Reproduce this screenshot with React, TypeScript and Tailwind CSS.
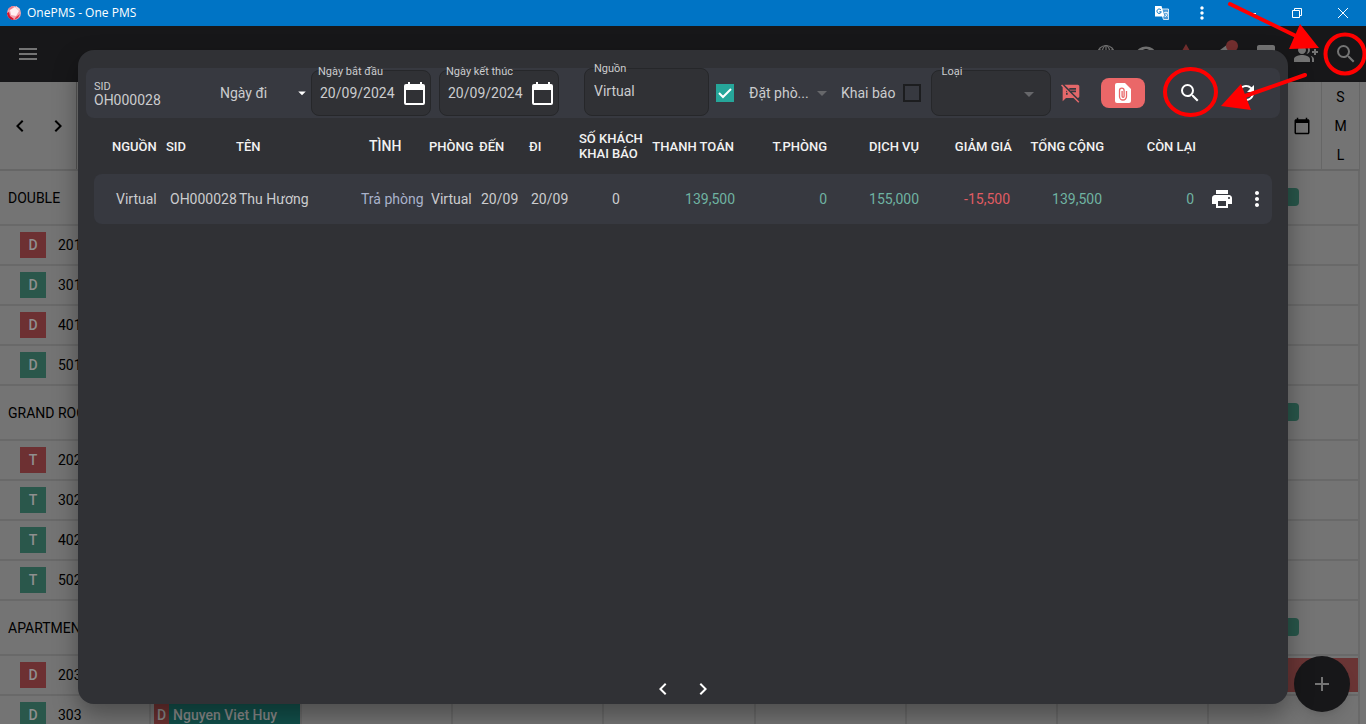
import {
  MdAdd,
  MdArrowDropDown,
  MdCalendarToday,
  MdChevronLeft,
  MdChevronRight,
  MdGroupAdd,
  MdMenu,
  MdMoreVert,
  MdPrint,
  MdRefresh,
  MdSearch,
  MdSpeakerNotesOff,
  MdViewAgenda,
  MdVisibility,
  MdWarning,
} from "react-icons/md";

type Room = { type: string; number: string; busy: boolean };
type Group = { name: string; rooms: Room[] };

const groups: Group[] = [
  {
    name: "DOUBLE",
    rooms: [
      { type: "D", number: "201", busy: true },
      { type: "D", number: "301", busy: false },
      { type: "D", number: "401", busy: true },
      { type: "D", number: "501", busy: false },
    ],
  },
  {
    name: "GRAND ROOM",
    rooms: [
      { type: "T", number: "202", busy: true },
      { type: "T", number: "302", busy: false },
      { type: "T", number: "402", busy: false },
      { type: "T", number: "502", busy: false },
    ],
  },
  {
    name: "APARTMENT",
    rooms: [
      { type: "D", number: "203", busy: true },
      { type: "D", number: "303", busy: false },
    ],
  },
];

const days = [1, 2, 3, 4, 5, 6, 7];

const columns = [
  { title: "NGUỒN", col: "w-[68px]", head: "pl-[18px]" },
  { title: "SID", col: "w-[74px]", head: "pl-1" },
  { title: "TÊN", col: "", head: "" },
  { title: "TÌNH", col: "w-[68px]", head: "pl-3 text-sm" },
  { title: "PHÒNG", col: "w-[50px]", head: "pl-1" },
  { title: "ĐẾN", col: "w-[50px]", head: "pl-1" },
  { title: "ĐI", col: "w-[50px]", head: "pl-1" },
  { title: "SỐ KHÁCH KHAI BÁO", col: "w-[74px]", head: "pl-1 whitespace-normal" },
  { title: "THANH TOÁN", col: "w-[87px]", head: "pr-0.5 text-right" },
  { title: "T.PHÒNG", col: "w-[92px]", head: "pr-px text-right" },
  { title: "DỊCH VỤ", col: "w-[92px]", head: "pr-px text-right" },
  { title: "GIẢM GIÁ", col: "w-[92px]", head: "text-right" },
  { title: "TỔNG CỘNG", col: "w-[92px]", head: "text-right" },
  { title: "CÒN LẠI", col: "w-[92px]", head: "text-right" },
];

function TitleBar() {
  return (
    <div className="flex h-[26px] shrink-0 items-center bg-[#0074c5] pl-1.5 text-white">
      <svg className="h-4 w-4" viewBox="0 0 16 16" aria-hidden="true">
        <circle cx="8" cy="8" r="7" fill="#f2a3ad" />
        <path d="M1 8l2-1 1 4 4 3-1 1A7 7 0 0 1 1 8z" fill="#d5122c" />
        <path d="M2 4l4-3 2 1-4 3z" fill="#f07c8a" />
        <path d="M4 5l5-3 4 4-3 5-5-1z" fill="#fff0f1" />
        <path d="M10 12l4-3-2 4-4 2z" fill="#e23348" />
        <path d="M10 1l4 3-1 2-3-3z" fill="#fbd3d7" />
      </svg>
      <div className="ml-[5px] font-['Open_Sans',sans-serif] text-xs">
        OnePMS - One PMS
      </div>
      <div className="ml-auto flex items-center">
        <button className="flex w-10 justify-center" aria-label="Translate">
          <svg className="h-3.5 w-3.5" viewBox="0 0 14 14">
            <path d="M5 3h8.500v10.500h-5z" fill="#4b9ad6" stroke="#fff" strokeWidth="0.800" />
            <path d="M0 0h6.500l3 10.500H0z" fill="#fff" />
            <path d="M6 4A2.200 2.200 0 1 0 6.300 5.800H4.300" fill="none" stroke="#0074c5" />
            <path
              d="M9 6.500h4M11 5.500v1M12.500 7c-.5 1.500-1 2.500-2.500 4M10 7.500l2.500 3"
              fill="none"
              stroke="#fff"
              strokeWidth="0.800"
            />
          </svg>
        </button>
        <button className="flex w-10 justify-center" aria-label="Menu">
          <MdMoreVert className="h-5 w-5" />
        </button>
        <button className="ml-1.5 flex w-[46px] justify-center" aria-label="Minimize">
          <svg className="h-2.5 w-2.5" viewBox="0 0 10 10">
            <path d="M0 5.500h10" stroke="#fff" />
          </svg>
        </button>
        <button className="flex w-[46px] justify-center" aria-label="Restore">
          <svg className="h-2.5 w-2.5" viewBox="0 0 10 10">
            <path d="M.5 2.500h7v7h-7zM2.500 2.500v-2h7v7h-2" fill="none" stroke="#fff" />
          </svg>
        </button>
        <button className="flex w-[46px] justify-center" aria-label="Close">
          <svg className="h-2.5 w-2.5" viewBox="0 0 10 10">
            <path d="M0 0l10 10M10 0L0 10" stroke="#fff" />
          </svg>
        </button>
      </div>
    </div>
  );
}

function AppHeader() {
  const button = "flex w-10 justify-center";
  return (
    <header className="flex h-14 shrink-0 items-center bg-[#171719] pl-2 text-[#747474] shadow-md">
      <button className={button} aria-label="Menu">
        <MdMenu className="h-6 w-6" />
      </button>
      <div className="ml-auto flex">
        <button className={button} aria-label="Language">
          <svg
            className="h-6 w-6"
            viewBox="0 0 24 24"
            fill="none"
            stroke="currentColor"
            strokeWidth="1.200"
          >
            <circle cx="12" cy="12" r="8.500" />
            <ellipse cx="12" cy="12" rx="4" ry="8.500" />
            <path d="M12 3.500v17M3.500 12h17M5 7.500c4 2 10 2 14 0M5 16.500c4-2 10-2 14 0" />
          </svg>
        </button>
        <button className={button} aria-label="Preview">
          <MdVisibility className="h-6 w-6" />
        </button>
        <button className={button} aria-label="Warnings">
          <MdWarning className="h-6 w-6 text-[#742f2f]" />
        </button>
        <button className="relative flex w-10 justify-center" aria-label="News">
          <svg className="h-6 w-6" viewBox="0 0 24 24" fill="currentColor">
            <path d="M14 2l7 15-11-1 1 5-3 1-3-6a5 5 0 0 1 1-8z" />
          </svg>
          <span className="absolute -top-0.5 right-2 h-3 w-3 rounded-full bg-[#742f2f]" />
        </button>
        <button className={button} aria-label="Reports">
          <MdViewAgenda className="h-6 w-6" />
        </button>
        <button className={button} aria-label="Add guest">
          <MdGroupAdd className="h-6 w-6" />
        </button>
        <button className={button} aria-label="Search">
          <MdSearch className="h-6 w-6" />
        </button>
      </div>
    </header>
  );
}

function RoomRow({ room }: { room: Room }) {
  return (
    <div className="grid h-10 grid-cols-9 border-b-2 border-[#696969]">
      <div className="flex items-center border-r-2 border-[#696969] pl-5">
        <span
          className={`flex h-[26px] w-[26px] items-center justify-center text-sm font-medium text-[#8f8f8f] ${
            room.busy ? "bg-[#6d3032]" : "bg-[#2a574b]"
          }`}
        >
          {room.type}
        </span>
        <span className="ml-3">{room.number}</span>
      </div>
      <div className="flex border-r-2 border-[#696969] py-px pl-[3px]">
        {room.number === "303" && (
          <div className="flex w-full bg-[#12504b] font-medium text-[#8a8a8a]">
            <span className="flex w-[15px] items-center justify-center bg-[#6b3030]">D</span>
            <span className="flex items-center pl-1 whitespace-nowrap">Nguyen Viet Huy</span>
          </div>
        )}
      </div>
      {days.map((day) => (
        <div key={day} className="border-r-2 border-[#696969] py-0.5">
          {room.number === "203" && day === 7 && <div className="h-full bg-[#6a3535]" />}
        </div>
      ))}
    </div>
  );
}

function Calendar() {
  return (
    <main className="flex-1 overflow-hidden bg-[#747474] pr-1.5 text-sm text-black">
      <div className="flex h-[89px] border-b-2 border-[#666666]">
        <div className="flex w-[77px] items-center justify-between border-r border-[#555555] pr-1.5 pl-2">
          <button aria-label="Previous">
            <MdChevronLeft className="h-6 w-6" />
          </button>
          <button aria-label="Next">
            <MdChevronRight className="h-6 w-6" />
          </button>
        </div>
        <div className="ml-auto flex items-center pr-2.5">
          <button aria-label="Pick a date">
            <MdCalendarToday className="h-[18px] w-[18px]" />
          </button>
        </div>
        <div className="flex w-[39px] flex-col border-x border-[#666666] pt-px text-center">
          <button className="h-[29px]">S</button>
          <button className="h-[29px]">M</button>
          <button className="h-[29px]">L</button>
        </div>
      </div>
      {groups.map((group) => (
        <section key={group.name}>
          <div className="flex h-[55px] items-center justify-between border-r-2 border-b-2 border-[#696969] pl-2">
            <h2>{group.name}</h2>
            <span className="mr-[59px] mb-px h-[18px] w-8 rounded bg-[#28564a]" />
          </div>
          {group.rooms.map((room) => (
            <RoomRow key={room.number} room={room} />
          ))}
        </section>
      ))}
    </main>
  );
}

function CalendarIcon() {
  return (
    <svg className="h-6 w-6" viewBox="0 0 24 24" fill="#fff" aria-hidden="true">
      <path d="M5 0h2v2h10V0h2v2h1a2 2 0 0 1 2 2v17a2 2 0 0 1-2 2H3a2 2 0 0 1-2-2V4a2 2 0 0 1 2-2h2zM3 8v13h17V8z" />
    </svg>
  );
}

function DateField({ id, label }: { id: string; label: string }) {
  return (
    <div className="relative flex h-[46px] w-[120px] items-center rounded-lg border border-[#26272a] bg-[#303135] pr-[3px] pl-2">
      <label
        htmlFor={id}
        className="absolute -top-[7px] left-1.5 text-[11px] leading-4 whitespace-nowrap"
      >
        {label}
      </label>
      <input
        id={id}
        defaultValue="20/09/2024"
        className="w-full min-w-0 bg-transparent text-sm outline-none"
      />
      <button type="button" className="mt-0.5" aria-label={label}>
        <CalendarIcon />
      </button>
    </div>
  );
}

function Filters() {
  return (
    <form className="mx-2 flex h-[50px] items-center rounded-lg bg-[#373940] pl-2 text-sm text-[#cbccce]">
      <div className="mt-0.5 flex w-[126px] flex-col">
        <label htmlFor="sid" className="text-[11px] leading-3">
          SID
        </label>
        <input
          id="sid"
          defaultValue="OH000028"
          className="h-3.5 w-full bg-transparent text-sm leading-3.5 outline-none"
        />
      </div>
      <div className="relative w-[91px]">
        <select
          aria-label="Loại ngày"
          className="w-full appearance-none bg-transparent outline-none"
        >
          <option>Ngày đi</option>
        </select>
        <MdArrowDropDown className="pointer-events-none absolute top-px right-0 h-[18px] w-[18px] text-white" />
      </div>
      <DateField id="from" label="Ngày bắt đầu" />
      <div className="w-2" />
      <DateField id="to" label="Ngày kết thúc" />
      <div className="relative mb-0.5 ml-[25px] h-12 w-[125px] rounded-lg border border-[#26272a] bg-[#303135]">
        <label htmlFor="source" className="absolute -top-2 left-[9px] text-[11px] leading-4">
          Nguồn
        </label>
        <input
          id="source"
          defaultValue="Virtual"
          className="h-11 w-full bg-transparent px-[9px] outline-none"
        />
      </div>
      <span className="relative ml-[7px] flex h-[18px] w-[18px]">
        <input
          type="checkbox"
          aria-label="Đặt phòng"
          defaultChecked
          className="h-[18px] w-[18px] appearance-none bg-[#26a69a]"
        />
        <svg
          className="pointer-events-none absolute inset-0"
          viewBox="0 0 18 18"
          fill="none"
          stroke="#fff"
          strokeWidth="2"
        >
          <path d="M3 9l4 4 8-8" />
        </svg>
      </span>
      <div className="relative ml-[15px] w-[83px]">
        <select
          aria-label="Trạng thái"
          className="w-full appearance-none bg-transparent outline-none"
        >
          <option>Đặt phò...</option>
        </select>
        <MdArrowDropDown className="pointer-events-none absolute -top-0.5 -right-0.5 h-6 w-6 text-[#66676a]" />
      </div>
      <label htmlFor="declared" className="ml-[9px] whitespace-nowrap">
        Khai báo
      </label>
      <input
        id="declared"
        type="checkbox"
        className="ml-2 h-[18px] w-[18px] shrink-0 appearance-none border-2 border-[#1c1d1f]"
      />
      <div className="relative ml-2.5 h-[46px] w-[120px] rounded-lg border border-[#26272a] bg-[#303135]">
        <label htmlFor="kind" className="absolute -top-[7px] left-[9px] text-[11px] leading-4">
          Loại
        </label>
        <select id="kind" className="h-full w-full appearance-none bg-transparent outline-none">
          <option></option>
        </select>
        <MdArrowDropDown className="pointer-events-none absolute top-[11px] right-[9px] h-6 w-6 text-[#66676a]" />
      </div>
      <button type="button" className="ml-2.5" aria-label="Ghi chú">
        <MdSpeakerNotesOff className="h-5 w-5 text-[#e4686a]" />
      </button>
      <button
        type="button"
        className="ml-5 flex h-[30px] w-11 items-center justify-center rounded-lg bg-[#ea6768]"
        aria-label="Tệp đính kèm"
      >
        <svg className="h-6 w-6" viewBox="0 0 24 24">
          <path d="M6 2h8l6 6v12a2 2 0 0 1-2 2H6a2 2 0 0 1-2-2V4a2 2 0 0 1 2-2z" fill="#fff" />
          <path
            d="M15.500 10v5.500a3.500 3.500 0 0 1-7 0V9.500a2.300 2.300 0 0 1 4.600 0v5.800a1 1 0 0 1-2 0V10"
            fill="none"
            stroke="#ea6768"
            strokeWidth="1.300"
          />
        </svg>
      </button>
      <button type="button" className="ml-[33px] text-white" aria-label="Tìm kiếm">
        <MdSearch className="h-6 w-6" />
      </button>
      <button type="button" className="ml-8 text-white" aria-label="Làm mới">
        <MdRefresh className="h-6 w-6" />
      </button>
    </form>
  );
}

function BookingTable() {
  return (
    <div className="px-4">
      <table className="w-full table-fixed whitespace-nowrap">
        <colgroup>
          {columns.map((column) => (
            <col key={column.title} className={column.col} />
          ))}
          <col className="w-[52px]" />
          <col className="w-6" />
        </colgroup>
        <thead>
          <tr className="h-14 text-left text-[13px] leading-[15px] text-[#f2f2f2]">
            {columns.map((column) => (
              <th key={column.title} className={`font-medium ${column.head}`}>
                {column.title}
              </th>
            ))}
            <th></th>
            <th></th>
          </tr>
        </thead>
        <tbody>
          <tr className="h-[50px] bg-[#373940] text-sm text-[#cbccce]">
            <td className="rounded-l-lg pl-[22px]">Virtual</td>
            <td className="pl-2">OH000028</td>
            <td className="pl-[3px]">Thu Hương</td>
            <td className="pl-1 text-[#a9b2cb]">Trả phòng</td>
            <td className="pl-1.5">Virtual</td>
            <td className="pl-1.5">20/09</td>
            <td className="pl-1.5">20/09</td>
            <td className="pl-2 text-center">0</td>
            <td className="pr-px text-right text-[#6fb3a2]">139,500</td>
            <td className="pr-px text-right text-[#6fb3a2]">0</td>
            <td className="pr-px text-right text-[#6fb3a2]">155,000</td>
            <td className="pr-0.5 text-right text-[#e05c63]">-15,500</td>
            <td className="pr-0.5 text-right text-[#6fb3a2]">139,500</td>
            <td className="pr-0.5 text-right text-[#6fb3a2]">0</td>
            <td>
              <button className="flex w-full justify-center text-white" aria-label="In">
                <MdPrint className="h-6 w-6" />
              </button>
            </td>
            <td className="rounded-r-lg pr-1.5">
              <button className="flex w-full justify-center text-white" aria-label="Thêm">
                <MdMoreVert className="h-6 w-6 shrink-0" />
              </button>
            </td>
          </tr>
        </tbody>
      </table>
    </div>
  );
}

function SearchDialog() {
  return (
    <div
      role="dialog"
      aria-label="Tìm kiếm"
      className="absolute inset-x-[78px] top-[50px] bottom-5 flex flex-col rounded-2xl bg-[#303135] pt-[18px] shadow-[0_11px_24px_rgba(0,0,0,0.35)]"
    >
      <Filters />
      <BookingTable />
      <div className="mt-auto mb-[3px] flex justify-center text-white">
        <button className="flex h-6 w-10 items-center justify-center" aria-label="Trang trước">
          <MdChevronLeft className="h-6 w-6" />
        </button>
        <button className="flex h-6 w-10 items-center justify-center" aria-label="Trang sau">
          <MdChevronRight className="h-6 w-6" />
        </button>
      </div>
    </div>
  );
}

// red circles and arrows that point at the two search buttons
function Annotations() {
  return (
    <svg
      className="pointer-events-none absolute top-0 right-0 h-[130px] w-[216px]"
      viewBox="0 0 216 130"
      fill="none"
      stroke="#ff0000"
      strokeWidth="4"
      strokeLinecap="round"
      aria-hidden="true"
    >
      <circle cx="195" cy="54" r="19.500" />
      <ellipse cx="40.500" cy="92" rx="25.500" ry="23" />
      <path d="M80 4l66 32M155 75l-60 21" />
      <path d="M150 24l19 24-30 1zM91 84l10 26-30-4z" fill="#ff0000" stroke="none" />
    </svg>
  );
}

export default function App() {
  return (
    <div className="relative flex h-screen flex-col overflow-hidden font-[Roboto,'Noto_Sans',sans-serif]">
      <TitleBar />
      <AppHeader />
      <Calendar />
      <button
        className="absolute right-4 bottom-3 flex h-14 w-14 items-center justify-center rounded-full bg-[#171719] text-[#747474] shadow-lg"
        aria-label="Thêm đặt phòng"
      >
        <MdAdd className="h-6 w-6" />
      </button>
      <SearchDialog />
      <Annotations />
    </div>
  );
}
